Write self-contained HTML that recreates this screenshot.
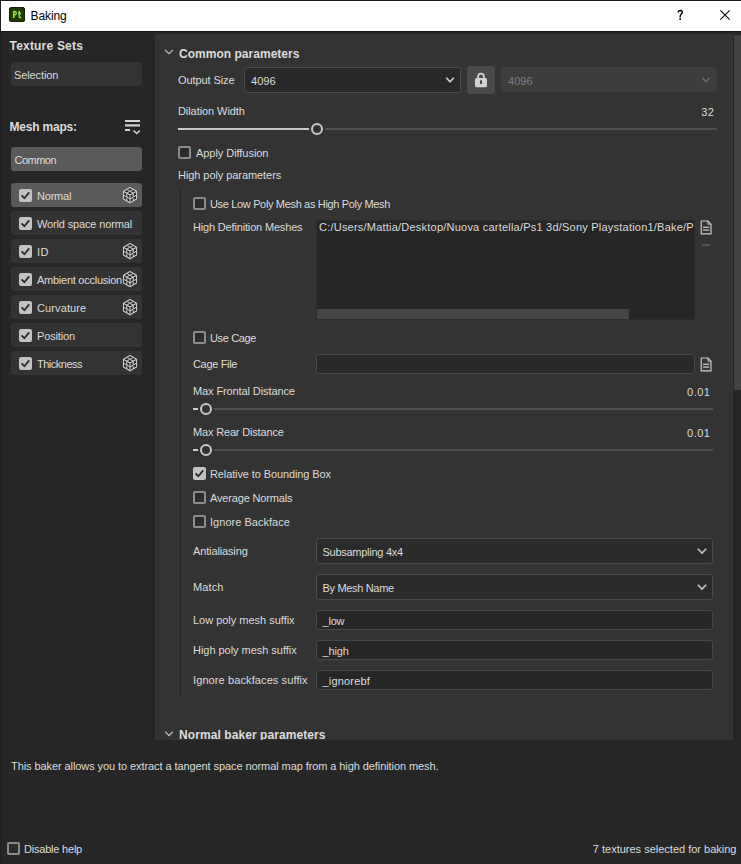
<!DOCTYPE html>
<html><head><meta charset="utf-8"><style>
html,body{margin:0;padding:0;width:741px;height:864px;overflow:hidden;background:#262626;}
body{position:relative;font-family:"Liberation Sans",sans-serif;}
.r{position:absolute;box-sizing:content-box;}
.t{position:absolute;white-space:nowrap;line-height:14px;font-family:"Liberation Sans",sans-serif;}
svg.r{overflow:visible;}
</style></head><body>
<div class="r" style="left:0px;top:0px;width:741px;height:864px;background:#262626;"></div>
<div class="r" style="left:0px;top:0px;width:741px;height:1px;background:#1b1b1b;"></div>
<div class="r" style="left:0px;top:0px;width:1px;height:864px;background:#1f1f1f;"></div>
<div class="r" style="left:1px;top:1px;width:740px;height:30px;background:#ffffff;"></div>
<div class="r" style="left:1px;top:31px;width:740px;height:1px;background:#161616;"></div>
<svg class="r" style="left:9px;top:7px" width="16" height="15"><rect x="0" y="0" width="16" height="15" rx="2.5" fill="#1a2e00"/><rect x="0.5" y="0.5" width="15" height="14" rx="2.2" fill="#213800" stroke="#152400" stroke-width="1"/><g stroke="#8be04a" stroke-width="1.55" fill="none" stroke-linecap="butt"><path d="M4.7 11.1 V4.5 H5.5 A1.7 1.7 0 0 1 5.5 7.9 H4.7"/><path d="M10.3 3.9 V9.6 Q10.3 10.6 11.3 10.6 H12.2 M9 6.5 H12.2"/></g></svg>
<div class="t" style="left:30.5px;top:9px;font-size:12px;letter-spacing:-0.08px;color:#000000;">Baking</div>
<svg class="r" style="left:676px;top:9px" width="9" height="12"><path d="M2.1 3.3 Q2.3 1.4 4.2 1.4 Q6.3 1.4 6.3 3.3 Q6.3 4.6 5 5.5 Q4.2 6.1 4.2 7.2 V8.3" stroke="#000" stroke-width="1.45" fill="none"/><rect x="3.35" y="9.2" width="1.7" height="1.7" fill="#000"/></svg>
<svg class="r" style="left:719px;top:9px" width="13" height="13"><path d="M1.3 1.3 L10.7 10.7 M10.7 1.3 L1.3 10.7" stroke="#000" stroke-width="1.05" fill="none"/></svg>
<div class="t" style="left:9.5px;top:39px;font-size:12px;font-weight:bold;letter-spacing:0.2px;color:#dcdcdc;">Texture Sets</div>
<div class="r" style="left:11px;top:62px;width:131px;height:24px;background:#333333;border-radius:3px;"></div>
<div class="t" style="left:14px;top:68px;font-size:11px;letter-spacing:-0.1px;color:#dcdcdc;">Selection</div>
<div class="t" style="left:9.5px;top:120px;font-size:12px;font-weight:bold;letter-spacing:-0.2px;color:#dcdcdc;">Mesh maps:</div>
<svg class="r" style="left:124px;top:118px" width="18" height="18"><g fill="#d2d2d2"><rect x="1" y="2" width="15" height="2"/><rect x="1" y="6.3" width="15" height="2.2"/><rect x="1" y="11" width="5" height="2"/></g><path d="M9.5 12.5 L12.7 15.5 L15.9 12.5" stroke="#d2d2d2" stroke-width="1.6" fill="none"/></svg>
<div class="r" style="left:11px;top:147px;width:131px;height:24px;background:#5a5a5a;border-radius:3px;"></div>
<div class="t" style="left:14.5px;top:153px;font-size:11px;letter-spacing:-0.52px;color:#dcdcdc;">Common</div>
<div class="r" style="left:11px;top:183px;width:131px;height:24px;background:#5a5a5a;border-radius:3px;"></div>
<div class="r" style="left:19px;top:189px;width:13px;height:13px;background:#c2c2c2;border-radius:2px;"></div>
<svg class="r" style="left:19px;top:189px" width="13" height="13"><path d="M2.6 6.4 L5.3 9.3 L10.2 3.4" stroke="#262626" stroke-width="1.7" fill="none"/></svg>
<div class="t" style="left:37px;top:189px;font-size:11px;letter-spacing:-0.2px;color:#dcdcdc;">Normal</div>
<svg class="r" style="left:122px;top:186px" width="16" height="18" viewBox="0 0 16 18"><path d="M8 1.5 L14.5 5.25 L14.5 13 L8 16.75 L1.5 13 L1.5 5.25 Z" fill="#232323" stroke="#cacaca" stroke-width="1.1" stroke-linejoin="round"/><g stroke="#cacaca" stroke-width="1.1" fill="none">
<path d="M1.5 5.25 L8 9 L14.5 5.25 M8 9 L8 16.75"/>
<path d="M4.75 3.375 L11.25 7.125 M11.25 3.375 L4.75 7.125"/>
<path d="M4.75 7.125 L4.75 14.875 M1.5 9.125 L8 12.875 L14.5 9.125 M11.25 7.125 L11.25 14.875"/>
</g></svg>
<div class="r" style="left:11px;top:211px;width:131px;height:24px;background:#333333;border-radius:3px;"></div>
<div class="r" style="left:19px;top:217px;width:13px;height:13px;background:#c2c2c2;border-radius:2px;"></div>
<svg class="r" style="left:19px;top:217px" width="13" height="13"><path d="M2.6 6.4 L5.3 9.3 L10.2 3.4" stroke="#262626" stroke-width="1.7" fill="none"/></svg>
<div class="t" style="left:37px;top:217px;font-size:11px;letter-spacing:-0.147px;color:#dcdcdc;">World space normal</div>
<div class="r" style="left:11px;top:239px;width:131px;height:24px;background:#333333;border-radius:3px;"></div>
<div class="r" style="left:19px;top:245px;width:13px;height:13px;background:#c2c2c2;border-radius:2px;"></div>
<svg class="r" style="left:19px;top:245px" width="13" height="13"><path d="M2.6 6.4 L5.3 9.3 L10.2 3.4" stroke="#262626" stroke-width="1.7" fill="none"/></svg>
<div class="t" style="left:37px;top:245px;font-size:11px;letter-spacing:0.5px;color:#dcdcdc;">ID</div>
<svg class="r" style="left:122px;top:242px" width="16" height="18" viewBox="0 0 16 18"><path d="M8 1.5 L14.5 5.25 L14.5 13 L8 16.75 L1.5 13 L1.5 5.25 Z" fill="#232323" stroke="#cacaca" stroke-width="1.1" stroke-linejoin="round"/><g stroke="#cacaca" stroke-width="1.1" fill="none">
<path d="M1.5 5.25 L8 9 L14.5 5.25 M8 9 L8 16.75"/>
<path d="M4.75 3.375 L11.25 7.125 M11.25 3.375 L4.75 7.125"/>
<path d="M4.75 7.125 L4.75 14.875 M1.5 9.125 L8 12.875 L14.5 9.125 M11.25 7.125 L11.25 14.875"/>
</g></svg>
<div class="r" style="left:11px;top:267px;width:131px;height:24px;background:#333333;border-radius:3px;"></div>
<div class="r" style="left:19px;top:273px;width:13px;height:13px;background:#c2c2c2;border-radius:2px;"></div>
<svg class="r" style="left:19px;top:273px" width="13" height="13"><path d="M2.6 6.4 L5.3 9.3 L10.2 3.4" stroke="#262626" stroke-width="1.7" fill="none"/></svg>
<div class="t" style="left:37px;top:273px;font-size:11px;letter-spacing:-0.256px;color:#dcdcdc;">Ambient occlusion</div>
<svg class="r" style="left:122px;top:270px" width="16" height="18" viewBox="0 0 16 18"><path d="M8 1.5 L14.5 5.25 L14.5 13 L8 16.75 L1.5 13 L1.5 5.25 Z" fill="#232323" stroke="#cacaca" stroke-width="1.1" stroke-linejoin="round"/><g stroke="#cacaca" stroke-width="1.1" fill="none">
<path d="M1.5 5.25 L8 9 L14.5 5.25 M8 9 L8 16.75"/>
<path d="M4.75 3.375 L11.25 7.125 M11.25 3.375 L4.75 7.125"/>
<path d="M4.75 7.125 L4.75 14.875 M1.5 9.125 L8 12.875 L14.5 9.125 M11.25 7.125 L11.25 14.875"/>
</g></svg>
<div class="r" style="left:11px;top:295px;width:131px;height:24px;background:#333333;border-radius:3px;"></div>
<div class="r" style="left:19px;top:301px;width:13px;height:13px;background:#c2c2c2;border-radius:2px;"></div>
<svg class="r" style="left:19px;top:301px" width="13" height="13"><path d="M2.6 6.4 L5.3 9.3 L10.2 3.4" stroke="#262626" stroke-width="1.7" fill="none"/></svg>
<div class="t" style="left:37px;top:301px;font-size:11px;letter-spacing:0.113px;color:#dcdcdc;">Curvature</div>
<svg class="r" style="left:122px;top:298px" width="16" height="18" viewBox="0 0 16 18"><path d="M8 1.5 L14.5 5.25 L14.5 13 L8 16.75 L1.5 13 L1.5 5.25 Z" fill="#232323" stroke="#cacaca" stroke-width="1.1" stroke-linejoin="round"/><g stroke="#cacaca" stroke-width="1.1" fill="none">
<path d="M1.5 5.25 L8 9 L14.5 5.25 M8 9 L8 16.75"/>
<path d="M4.75 3.375 L11.25 7.125 M11.25 3.375 L4.75 7.125"/>
<path d="M4.75 7.125 L4.75 14.875 M1.5 9.125 L8 12.875 L14.5 9.125 M11.25 7.125 L11.25 14.875"/>
</g></svg>
<div class="r" style="left:11px;top:323px;width:131px;height:24px;background:#333333;border-radius:3px;"></div>
<div class="r" style="left:19px;top:329px;width:13px;height:13px;background:#c2c2c2;border-radius:2px;"></div>
<svg class="r" style="left:19px;top:329px" width="13" height="13"><path d="M2.6 6.4 L5.3 9.3 L10.2 3.4" stroke="#262626" stroke-width="1.7" fill="none"/></svg>
<div class="t" style="left:37px;top:329px;font-size:11px;letter-spacing:-0.143px;color:#dcdcdc;">Position</div>
<div class="r" style="left:11px;top:351px;width:131px;height:24px;background:#333333;border-radius:3px;"></div>
<div class="r" style="left:19px;top:357px;width:13px;height:13px;background:#c2c2c2;border-radius:2px;"></div>
<svg class="r" style="left:19px;top:357px" width="13" height="13"><path d="M2.6 6.4 L5.3 9.3 L10.2 3.4" stroke="#262626" stroke-width="1.7" fill="none"/></svg>
<div class="t" style="left:37px;top:357px;font-size:11px;letter-spacing:-0.488px;color:#dcdcdc;">Thickness</div>
<svg class="r" style="left:122px;top:354px" width="16" height="18" viewBox="0 0 16 18"><path d="M8 1.5 L14.5 5.25 L14.5 13 L8 16.75 L1.5 13 L1.5 5.25 Z" fill="#232323" stroke="#cacaca" stroke-width="1.1" stroke-linejoin="round"/><g stroke="#cacaca" stroke-width="1.1" fill="none">
<path d="M1.5 5.25 L8 9 L14.5 5.25 M8 9 L8 16.75"/>
<path d="M4.75 3.375 L11.25 7.125 M11.25 3.375 L4.75 7.125"/>
<path d="M4.75 7.125 L4.75 14.875 M1.5 9.125 L8 12.875 L14.5 9.125 M11.25 7.125 L11.25 14.875"/>
</g></svg>
<div class="r" style="left:155px;top:34px;width:578px;height:706px;background:#333333;"></div>
<div class="r" style="left:734px;top:35px;width:7px;height:355px;background:#424242;"></div>
<svg class="r" style="left:0px;top:0px;width:741px;height:864px;pointer-events:none" width="741" height="864"><path d="M165.05 49.849999999999994 L169.0 53.64 L172.95 49.849999999999994" stroke="#c8c8c8" stroke-width="1.1" fill="none"/></svg>
<div class="t" style="left:179px;top:47px;font-size:12px;font-weight:bold;letter-spacing:0.025px;color:#dcdcdc;">Common parameters</div>
<div class="t" style="left:178px;top:73px;font-size:11px;letter-spacing:-0.09px;color:#dcdcdc;">Output Size</div>
<div class="r" style="left:244px;top:67px;width:215px;height:24px;background:#282828;border:1px solid #4a4a4a;border-radius:3px;"></div>
<div class="t" style="left:251px;top:74px;font-size:11px;letter-spacing:0.067px;color:#dcdcdc;">4096</div>
<svg class="r" style="left:0px;top:0px;width:741px;height:864px;pointer-events:none" width="741" height="864"><path d="M446.3 77.8 L450.05 81.84 L453.8 77.8" stroke="#d0d0d0" stroke-width="1.6" fill="none"/></svg>
<div class="r" style="left:467px;top:66px;width:28px;height:28px;background:#4a4a4a;border-radius:3px;"></div>
<svg class="r" style="left:474px;top:71px" width="14" height="17"><path d="M4.1 7.5 V5.5 A2.9 2.9 0 0 1 9.9 5.5 V7.5" stroke="#d2d2d2" stroke-width="1.8" fill="none"/><rect x="1" y="7" width="12" height="9.3" rx="1.6" fill="#d2d2d2"/><circle cx="7" cy="10.3" r="1.1" fill="#3a3a3a"/><path d="M6.4 10.5 h1.2 l0.35 2.6 h-1.9 z" fill="#3a3a3a"/></svg>
<div class="r" style="left:501px;top:67px;width:216px;height:25px;background:#3d3d3d;border-radius:3px;"></div>
<div class="t" style="left:508px;top:74px;font-size:11px;letter-spacing:0.067px;color:#808080;">4096</div>
<svg class="r" style="left:0px;top:0px;width:741px;height:864px;pointer-events:none" width="741" height="864"><path d="M702.4 77.8 L706.05 81.84 L709.7 77.8" stroke="#6a6a6a" stroke-width="1.6" fill="none"/></svg>
<div class="t" style="left:178px;top:104px;font-size:11px;letter-spacing:-0.069px;color:#dcdcdc;">Dilation Width</div>
<div class="t" style="right:26.5px;top:105px;font-size:11px;letter-spacing:0.5px;color:#dcdcdc;">32</div>
<div class="r" style="left:178px;top:128px;width:131px;height:2px;background:#c8c8c8;"></div>
<div class="r" style="left:325px;top:128px;width:392px;height:2px;background:#4f4f4f;"></div>
<div class="r" style="left:311px;top:123px;width:8px;height:8px;border:2px solid #c9c9c9;border-radius:50%;background:#333;"></div>
<div class="r" style="left:178px;top:146px;width:9px;height:9px;border:2px solid #8c8c8c;background:#2c2c2c;border-radius:2px;"></div>
<div class="t" style="left:196px;top:146px;font-size:11px;letter-spacing:-0.05px;color:#dcdcdc;">Apply Diffusion</div>
<div class="t" style="left:178px;top:168px;font-size:11px;letter-spacing:-0.068px;color:#dcdcdc;">High poly parameters</div>
<div class="r" style="left:180px;top:188px;width:1px;height:510px;background:#262626;"></div>
<div class="r" style="left:193px;top:197px;width:9px;height:9px;border:2px solid #8c8c8c;background:#2c2c2c;border-radius:2px;"></div>
<div class="t" style="left:210px;top:197px;font-size:11px;letter-spacing:-0.341px;color:#dcdcdc;">Use Low Poly Mesh as High Poly Mesh</div>
<div class="t" style="left:193px;top:220px;font-size:11px;letter-spacing:-0.167px;color:#dcdcdc;">High Definition Meshes</div>
<div class="r" style="left:316px;top:220px;width:377px;height:98px;background:#262626;border:1px solid #2c2c2c;border-radius:2px;overflow:hidden;"><div class="t" style="left:2px;top:-1px;font-size:11px;letter-spacing:0.22px;color:#dcdcdc;">C:/Users/Mattia/Desktop/Nuova cartella/Ps1 3d/Sony Playstation1/Bake/Playstation1_high.fbx</div><div class="r" style="left:0px;top:88px;width:312px;height:10px;background:#454545;"></div></div>
<svg class="r" style="left:700px;top:220px" width="13" height="16"><path d="M1.2 1.0 H7.8 L11.0 4.2 V13.9 H1.2 Z" stroke="#d0d0d0" stroke-width="1.15" fill="none" stroke-linejoin="round"/><path d="M7.9 1.0 V4.2 H11" stroke="#bdbdbd" stroke-width="1" fill="none"/><rect x="3" y="6.6" width="6.2" height="1.3" fill="#c8c8c8"/><rect x="3" y="9.4" width="6.2" height="1.3" fill="#c8c8c8"/></svg>
<div class="r" style="left:702px;top:244px;width:8px;height:2px;background:#555555;"></div>
<div class="r" style="left:193px;top:331px;width:9px;height:9px;border:2px solid #8c8c8c;background:#2c2c2c;border-radius:2px;"></div>
<div class="t" style="left:210px;top:331px;font-size:11px;letter-spacing:-0.371px;color:#dcdcdc;">Use Cage</div>
<div class="t" style="left:193px;top:357px;font-size:11px;letter-spacing:-0.325px;color:#dcdcdc;">Cage File</div>
<div class="r" style="left:316px;top:354px;width:377px;height:18px;background:#282828;border:1px solid #474747;border-radius:3px;"></div>
<svg class="r" style="left:700px;top:357px" width="13" height="16"><path d="M1.2 1.0 H7.8 L11.0 4.2 V13.9 H1.2 Z" stroke="#d0d0d0" stroke-width="1.15" fill="none" stroke-linejoin="round"/><path d="M7.9 1.0 V4.2 H11" stroke="#bdbdbd" stroke-width="1" fill="none"/><rect x="3" y="6.6" width="6.2" height="1.3" fill="#c8c8c8"/><rect x="3" y="9.4" width="6.2" height="1.3" fill="#c8c8c8"/></svg>
<div class="t" style="left:193px;top:384px;font-size:11px;letter-spacing:-0.105px;color:#dcdcdc;">Max Frontal Distance</div>
<div class="t" style="right:30.5px;top:385px;font-size:11px;letter-spacing:0.5px;color:#dcdcdc;">0.01</div>
<div class="r" style="left:193px;top:408px;width:5px;height:2px;background:#d0d0d0;"></div>
<div class="r" style="left:200px;top:403px;width:8px;height:8px;border:2px solid #c9c9c9;border-radius:50%;background:#333;"></div>
<div class="r" style="left:214px;top:408px;width:499px;height:2px;background:#4f4f4f;"></div>
<div class="t" style="left:193px;top:425px;font-size:11px;letter-spacing:-0.169px;color:#dcdcdc;">Max Rear Distance</div>
<div class="t" style="right:30.5px;top:426px;font-size:11px;letter-spacing:0.5px;color:#dcdcdc;">0.01</div>
<div class="r" style="left:193px;top:449px;width:5px;height:2px;background:#d0d0d0;"></div>
<div class="r" style="left:200px;top:444px;width:8px;height:8px;border:2px solid #c9c9c9;border-radius:50%;background:#333;"></div>
<div class="r" style="left:214px;top:449px;width:499px;height:2px;background:#4f4f4f;"></div>
<div class="r" style="left:193px;top:467px;width:13px;height:13px;background:#c2c2c2;border-radius:2px;"></div>
<svg class="r" style="left:193px;top:467px" width="13" height="13"><path d="M2.6 6.4 L5.3 9.3 L10.2 3.4" stroke="#262626" stroke-width="1.7" fill="none"/></svg>
<div class="t" style="left:210px;top:467px;font-size:11px;letter-spacing:-0.113px;color:#dcdcdc;">Relative to Bounding Box</div>
<div class="r" style="left:193px;top:491px;width:9px;height:9px;border:2px solid #8c8c8c;background:#2c2c2c;border-radius:2px;"></div>
<div class="t" style="left:210px;top:491px;font-size:11px;letter-spacing:-0.157px;color:#dcdcdc;">Average Normals</div>
<div class="r" style="left:193px;top:515px;width:9px;height:9px;border:2px solid #8c8c8c;background:#2c2c2c;border-radius:2px;"></div>
<div class="t" style="left:210px;top:515px;font-size:11px;letter-spacing:0.029px;color:#dcdcdc;">Ignore Backface</div>
<div class="r" style="left:316px;top:538px;width:395px;height:24px;background:#2b2b2b;border:1px solid #4a4a4a;border-radius:3px;"></div>
<div class="t" style="left:322.5px;top:545px;font-size:11px;letter-spacing:-0.264px;color:#dcdcdc;">Subsampling 4x4</div>
<div class="t" style="left:193px;top:544px;font-size:11px;letter-spacing:-0.136px;color:#dcdcdc;">Antialiasing</div>
<svg class="r" style="left:0px;top:0px;width:741px;height:864px;pointer-events:none" width="741" height="864"><path d="M697.8 548.8 L702.0 553.04 L706.2 548.8" stroke="#c4c4c4" stroke-width="1.6" fill="none"/></svg>
<div class="r" style="left:316px;top:574px;width:395px;height:24px;background:#2b2b2b;border:1px solid #4a4a4a;border-radius:3px;"></div>
<div class="t" style="left:322.5px;top:581px;font-size:11px;letter-spacing:-0.327px;color:#dcdcdc;">By Mesh Name</div>
<div class="t" style="left:193px;top:580px;font-size:11px;letter-spacing:0.1px;color:#dcdcdc;">Match</div>
<svg class="r" style="left:0px;top:0px;width:741px;height:864px;pointer-events:none" width="741" height="864"><path d="M697.8 584.8 L702.0 589.04 L706.2 584.8" stroke="#c4c4c4" stroke-width="1.6" fill="none"/></svg>
<div class="r" style="left:316px;top:610px;width:395px;height:18px;background:#262626;border:1px solid #474747;border-radius:3px;"></div>
<div class="t" style="left:322.5px;top:614px;font-size:11px;letter-spacing:-0.2px;color:#dcdcdc;">_low</div>
<div class="t" style="left:193px;top:613px;font-size:11px;letter-spacing:-0.016px;color:#dcdcdc;">Low poly mesh suffix</div>
<div class="r" style="left:316px;top:640px;width:395px;height:18px;background:#262626;border:1px solid #474747;border-radius:3px;"></div>
<div class="t" style="left:322.5px;top:644px;font-size:11px;letter-spacing:-0.125px;color:#dcdcdc;">_high</div>
<div class="t" style="left:193px;top:643px;font-size:11px;letter-spacing:-0.035px;color:#dcdcdc;">High poly mesh suffix</div>
<div class="r" style="left:316px;top:670px;width:395px;height:18px;background:#262626;border:1px solid #474747;border-radius:3px;"></div>
<div class="t" style="left:322.5px;top:674px;font-size:11px;letter-spacing:0.188px;color:#dcdcdc;">_ignorebf</div>
<div class="t" style="left:193px;top:673px;font-size:11px;letter-spacing:0.105px;color:#dcdcdc;">Ignore backfaces suffix</div>
<svg class="r" style="left:0px;top:0px;width:741px;height:864px;pointer-events:none" width="741" height="864"><path d="M165.35000000000002 731.75 L169.05 735.64 L172.75 731.75" stroke="#c8c8c8" stroke-width="1.1" fill="none"/></svg>
<div class="r" style="left:155px;top:720px;width:578px;height:20px;overflow:hidden;">
<div class="t" style="left:24px;top:8px;font-size:12px;font-weight:bold;letter-spacing:0.082px;color:#dcdcdc;">Normal baker parameters</div>
</div>
<div class="t" style="left:11px;top:759px;font-size:11px;letter-spacing:-0.082px;color:#dcdcdc;">This baker allows you to extract a tangent space normal map from a high definition mesh.</div>
<div class="r" style="left:7px;top:842px;width:9px;height:9px;border:2px solid #8c8c8c;background:#2c2c2c;border-radius:2px;"></div>
<div class="t" style="left:24px;top:842px;font-size:11px;letter-spacing:-0.209px;color:#dcdcdc;">Disable help</div>
<div class="t" style="right:4.5px;top:842px;font-size:11px;letter-spacing:0.0px;color:#dcdcdc;">7 textures selected for baking</div>
</body></html>
